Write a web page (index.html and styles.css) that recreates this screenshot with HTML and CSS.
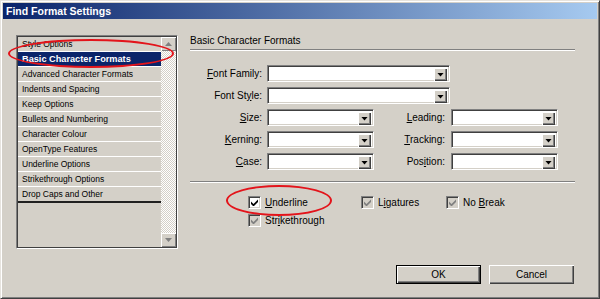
FILE: index.html
```html
<!DOCTYPE html>
<html lang="en">
<head>
  <meta charset="UTF-8">
  <title>Find Format Settings</title>
  <link rel="stylesheet" href="styles.css">
</head>
<body>
  <div class="window">
    <div class="titlebar">Find Format Settings</div>

    <div class="content">
      <div class="listbox">
        <ul class="items">
          <li>Style Options</li>
          <li class="selected">Basic Character Formats</li>
          <li>Advanced Character Formats</li>
          <li>Indents and Spacing</li>
          <li>Keep Options</li>
          <li>Bullets and Numbering</li>
          <li>Character Colour</li>
          <li>OpenType Features</li>
          <li>Underline Options</li>
          <li>Strikethrough Options</li>
          <li>Drop Caps and Other</li>
        </ul>
        <div class="scrollbar">
          <div class="sb-btn up"></div>
          <div class="sb-track"></div>
          <div class="sb-btn down"></div>
        </div>
      </div>

      <div class="panel">
        <div class="heading">Basic Character Formats</div>
        <div class="rule"></div>

        <div class="form">
          <label><u>F</u>ont Family:</label>
          <div class="select wide"><span class="drop"></span></div>

          <label>Font St<u>y</u>le:</label>
          <div class="select wide"><span class="drop"></span></div>

          <label><u>S</u>ize:</label>
          <div class="select"><span class="drop"></span></div>
          <label class="right"><u>L</u>eading:</label>
          <div class="select"><span class="drop"></span></div>

          <label><u>K</u>erning:</label>
          <div class="select"><span class="drop"></span></div>
          <label class="right"><u>T</u>racking:</label>
          <div class="select"><span class="drop"></span></div>

          <label><u>C</u>ase:</label>
          <div class="select"><span class="drop"></span></div>
          <label class="right">Pos<u>i</u>tion:</label>
          <div class="select"><span class="drop"></span></div>
        </div>

        <div class="rule lower"></div>

        <div class="checks">
          <div class="check">
            <span class="box on">
              <svg viewBox="0 0 7 7" width="7" height="7"><polygon points="0,2.5 2.5,5 7,0.5 7,3 2.5,7.5 0,5"/></svg>
            </span>
            <span><u>U</u>nderline</span>
          </div>
          <div class="check">
            <span class="box">
              <svg viewBox="0 0 7 7" width="7" height="7"><polygon points="0,2.5 2.5,5 7,0.5 7,3 2.5,7.5 0,5"/></svg>
            </span>
            <span>L<u>i</u>gatures</span>
          </div>
          <div class="check">
            <span class="box">
              <svg viewBox="0 0 7 7" width="7" height="7"><polygon points="0,2.5 2.5,5 7,0.5 7,3 2.5,7.5 0,5"/></svg>
            </span>
            <span>No <u>B</u>reak</span>
          </div>
          <div class="check">
            <span class="box">
              <svg viewBox="0 0 7 7" width="7" height="7"><polygon points="0,2.5 2.5,5 7,0.5 7,3 2.5,7.5 0,5"/></svg>
            </span>
            <span>Str<u>i</u>kethrough</span>
          </div>
        </div>

        <div class="buttons">
          <button class="btn default">OK</button>
          <button class="btn">Cancel</button>
        </div>
      </div>
    </div>

    <!-- red annotation rings -->
    <div class="mark mark-list"></div>
    <div class="mark mark-underline"></div>
  </div>
</body>
</html>
```

FILE: styles.css
```css
body {
  margin: 0;
  background: #d4d0c8;
  font-family: "Liberation Sans", Arial, sans-serif;
  font-size: 10px;
  color: #000;
}

.window {
  position: relative;
  width: 600px;
  height: 299px;
  box-sizing: border-box;
  padding: 2px;
  background: #d4d0c8;
  border: 1px solid;
  border-color: #e6e3de #404040 #404040 #e6e3de;
  box-shadow: inset 1px 1px #fff, inset -1px -1px #808080;
}

.titlebar {
  height: 16px;
  line-height: 16px;
  padding-left: 3px;
  background: linear-gradient(to right, #0a246a, #a6caf0);
  color: #fff;
  font-weight: bold;
  font-size: 10.5px;
}

.content {
  display: flex;
  padding-left: 13px;
}

/* left list */
.listbox {
  display: flex;
  width: 162px;
  height: 214px;
  margin-top: 16px;
  box-sizing: border-box;
  padding: 1px;
  border: 1px solid;
  border-color: #808080 #fff #fff #808080;
  box-shadow: inset 1px 1px #404040, inset -1px -1px #404040;
}

.items {
  flex: 1;
  margin: 0;
  padding: 0;
  list-style: none;
}

.items li {
  height: 14px;
  line-height: 14px;
  padding-left: 4px;
  border-bottom: 1px solid #fff;
  font-size: 8.5px;
  white-space: nowrap;
}

.items li.selected {
  background: #0a246a;
  color: #fff;
  font-weight: bold;
  font-size: 9.2px;
}

.items li:last-child {
  border-bottom: 2px solid #202020;
}

.scrollbar {
  width: 15px;
  display: flex;
  flex-direction: column;
}

.sb-track {
  flex: 1;
  background: repeating-conic-gradient(#fff 0 25%, #d4d0c8 0 50%) 0 0 / 2px 2px;
}

.sb-btn {
  height: 14px;
  background: #d4d0c8;
  box-shadow: inset 1px 1px #fff, inset -1px -1px #808080;
  display: flex;
  align-items: center;
  justify-content: center;
}

.sb-btn::after {
  content: "";
  width: 7px;
  height: 4px;
  background: #808080;
}

.sb-btn.up::after {
  clip-path: polygon(50% 0, 100% 100%, 0 100%);
}

.sb-btn.down::after {
  clip-path: polygon(0 0, 100% 0, 50% 100%);
}

/* right panel */
.panel {
  width: 385px;
  margin-left: 12px;
  padding-top: 16px;
}

.heading {
  height: 12px;
  line-height: 12px;
  font-size: 10px;
}

.rule {
  margin-top: 2px;
  border-top: 1px solid #808080;
  border-bottom: 1px solid #fff;
}

.rule.lower {
  margin-top: 11px;
}

.form {
  display: grid;
  grid-template-columns: 77px 107px 77px 107px;
  grid-auto-rows: 17px;
  row-gap: 5px;
  margin-top: 14px;
}

.form label {
  grid-column: 1;
  text-align: right;
  padding-right: 5px;
  line-height: 17px;
  white-space: nowrap;
}

.form label.right {
  grid-column: 3;
  padding-right: 6px;
}

.select {
  box-sizing: border-box;
  height: 17px;
  padding: 2px;
  display: flex;
  justify-content: flex-end;
  background: #fff;
  border: 1px solid;
  border-color: #808080 #fff #fff #808080;
  box-shadow: inset 1px 1px #404040, inset -1px -1px #d4d0c8;
}

.select.wide {
  grid-column: 2 / span 2;
  width: 183px;
}

.drop {
  width: 13px;
  height: 13px;
  background: #d4d0c8;
  box-shadow: inset 1px 1px #fff, inset -1px -1px #404040, inset -2px -2px #808080;
  display: flex;
  align-items: center;
  justify-content: center;
}

.drop::after {
  content: "";
  width: 7px;
  height: 4px;
  background: #000;
  clip-path: polygon(0 0, 100% 0, 50% 100%);
}

.checks {
  display: grid;
  grid-template-columns: 113px 85px auto;
  grid-auto-rows: 13px;
  row-gap: 5px;
  margin-top: 13px;
  padding-left: 58px;
}

.check {
  display: flex;
  align-items: center;
  gap: 4px;
  font-size: 10px;
}

.box {
  width: 13px;
  height: 13px;
  box-sizing: border-box;
  display: flex;
  align-items: center;
  justify-content: center;
  background: #d4d0c8;
  border: 1px solid;
  border-color: #808080 #fff #fff #808080;
  box-shadow: inset 1px 1px #404040, inset -1px -1px #d4d0c8;
  fill: #808080;
}

.box.on {
  background: #fff;
  fill: #000;
}

.buttons {
  display: flex;
  justify-content: flex-end;
  gap: 8px;
  margin-top: 38px;
  padding-right: 1px;
}

.btn {
  width: 85px;
  height: 19px;
  box-sizing: border-box;
  padding: 0;
  font-family: inherit;
  font-size: 10px;
  color: #000;
  background: #d4d0c8;
  border: none;
  box-shadow: inset 1px 1px #fff, inset -1px -1px #404040, inset -2px -2px #808080;
}

.btn.default {
  border: 1px solid #000;
}

/* red annotation rings */
.mark {
  position: absolute;
  box-sizing: border-box;
  border: 2px solid #e3141b;
  border-radius: 50%;
}

.mark-list {
  left: 7px;
  top: 38px;
  width: 166px;
  height: 29px;
}

.mark-underline {
  left: 225px;
  top: 184px;
  width: 106px;
  height: 31px;
}
```
